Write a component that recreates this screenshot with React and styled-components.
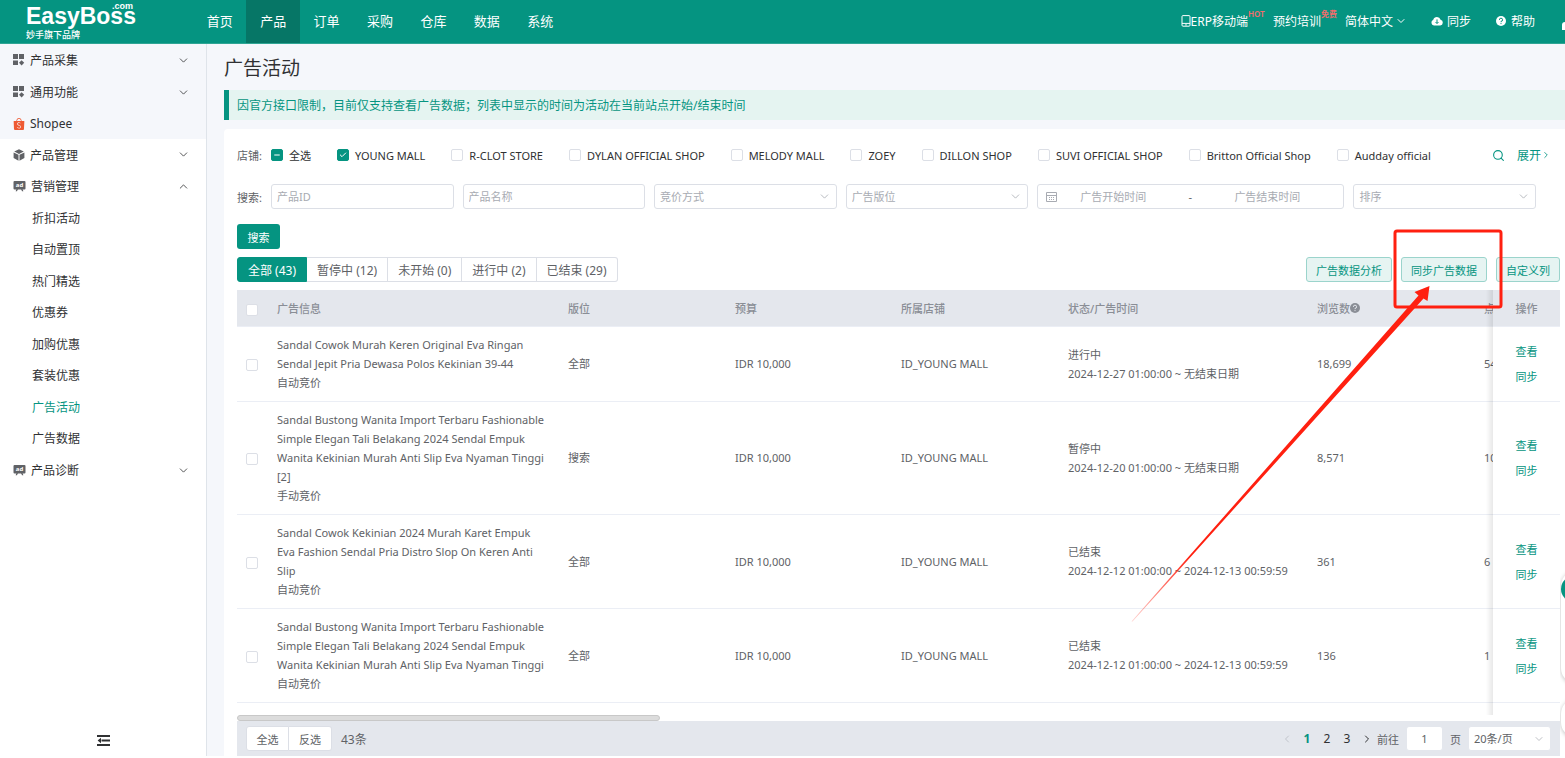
import { Check, ChevronDown, ChevronLeft, ChevronRight, ChevronUp, Minus, Search } from "lucide-react"
import { SiShopee } from "react-icons/si"
import styled, { createGlobalStyle } from "styled-components"

const GlobalStyle = createGlobalStyle`
* { box-sizing: border-box; }
body {
margin: 0;
background: white;
color: #606266;
font-family: "Noto Sans", "Noto Sans CJK SC", sans-serif;
font-size: 11px;
overflow: hidden;
}
button, input, select { font: inherit; color: inherit; margin: 0; }
a { color: inherit; text-decoration: none; }
svg { display: block; flex: none; }
`

const Shell = styled.div`
height: 100vh;
padding-bottom: 2px;
display: flex;
flex-direction: column;
position: relative;
overflow: hidden;
`

/* header */
const Header = styled.header`
height: 44px;
flex: none;
display: flex;
background: #059481;
border-bottom: 1px solid #2fa594;
color: white;
`
const Brand = styled.a`
width: 193px;
padding: 3px 0 0 26px;
display: flex;
flex-direction: column;
`
const BrandName = styled.span`
display: flex;
align-items: flex-start;
font: bold 23px/26px "Liberation Sans", sans-serif;
position: relative;
`
const BrandSuffix = styled.span`
position: absolute;
left: 86px;
top: -2px;
font: bold 9px/10px "Liberation Sans", sans-serif;
`
const BrandNote = styled.span`
font-size: 9px;
line-height: 12px;
font-weight: 500;
`
const Nav = styled.nav`
display: flex;
width: 374px;
`
const NavItem = styled.a`
flex: 1;
display: flex;
align-items: center;
justify-content: center;
font-size: 13px;
padding-bottom: 2px;
background: ${(p) => (p.$active ? "#067666" : "transparent")};
`
const Tools = styled.div`
margin-left: auto;
display: flex;
align-items: center;
font-size: 12px;
padding-bottom: 2px;
`
const Tool = styled.a`
display: flex;
align-items: center;
gap: ${(p) => p.$gap || 0}px;
margin-right: ${(p) => p.$space}px;
position: relative;
white-space: nowrap;
`
const Tag = styled.sup`
position: absolute;
left: 100%;
top: -3px;
color: #f56c6c;
font-size: 8px;
line-height: 10px;
font-weight: 600;
`
const Avatar = styled.span`
width: 3px;
height: 8px;
margin-top: 10px;
border-radius: 8px 0 0 0;
background: white;
`

/* sidebar */
const Body = styled.div`
flex: 1;
min-height: 0;
display: flex;
background: #f5f7fb;
`
const Sidebar = styled.aside`
width: 207px;
flex: none;
display: flex;
flex-direction: column;
background: white;
border-right: 1px solid #dfe4ea;
color: #303133;
font-size: 12px;
`
const MenuTop = styled.div`
background: #f5f7fb;
`
const MenuItem = styled.a`
height: ${(p) => p.$height || 32}px;
padding: 0 16px 0 13px;
display: flex;
align-items: center;
gap: 5px;
`
const MenuLabel = styled.span`
flex: 1;
`
const SubMenu = styled.div`
display: grid;
grid-auto-rows: 1fr;
height: 252px;
`
const SubItem = styled.a`
display: flex;
align-items: center;
padding-left: 32px;
color: ${(p) => (p.$active ? "#059481" : "inherit")};
`
const Collapse = styled.button`
margin: auto auto 10px;
padding: 0;
border: 0;
background: none;
`

/* content */
const Main = styled.main`
flex: 1;
min-width: 0;
padding-left: 17px;
display: flex;
flex-direction: column;
`
const Title = styled.h1`
margin: 0;
padding-top: 2px;
font-size: 19px;
line-height: 44px;
font-weight: 400;
color: #303133;
`
const Notice = styled.p`
margin: 0 0 9px;
padding: 2px 0 0 8px;
border-left: 5px solid #059481;
background: #e5f4f1;
color: #059481;
font-size: 12px;
line-height: 28px;
`
const Card = styled.section`
flex: 1;
min-height: 0;
display: flex;
flex-direction: column;
padding: 13px 5px 0 13px;
background: white;
border-radius: 4px 0 0 0;
`
const ShopRow = styled.div`
height: 26px;
margin-bottom: 16px;
display: flex;
align-items: center;
gap: 9px;
`
const ShopList = styled.div`
flex: 1;
display: flex;
gap: 26px;
color: #303133;
white-space: nowrap;
`
const ShopLabel = styled.label`
display: flex;
align-items: center;
gap: 6px;
`
const ShopTools = styled.div`
display: flex;
align-items: center;
gap: 12px;
padding-right: 9px;
color: #059481;
font-size: 12px;
`
const More = styled.a`
display: flex;
align-items: center;
`
const Box = styled.span`
display: inline-grid;
vertical-align: middle;
width: 12px;
height: 12px;
flex: none;
place-items: center;
color: white;
svg, input { grid-area: 1 / 1; }
svg { pointer-events: none; }
`
const BoxInput = styled.input`
appearance: none;
width: 12px;
height: 12px;
background: ${(p) => (p.$on ? "#059481" : "white")};
border: 1px solid ${(p) => (p.$on ? "#059481" : "#dcdfe6")};
border-radius: 2px;
`
const Filters = styled.form`
display: grid;
grid-template-columns: auto 183fr 183fr 183fr 183fr 308fr 183fr;
align-items: center;
gap: 9px;
padding-right: 24px;
margin-bottom: 15px;
`
const fieldBox = `
height: 25px;
border: 1px solid #dcdfe6;
border-radius: 3px;
background: white;
min-width: 0;
`
const Field = styled.input`
${fieldBox}
padding: 0 5px;
&::placeholder { color: #a8abb2; }
`
const SelectWrap = styled.span`
min-width: 0;
display: grid;
align-items: center;
color: #a8abb2;
svg, select { grid-area: 1 / 1; }
svg { justify-self: end; margin-right: 6px; pointer-events: none; }
`
const Select = styled.select`
${fieldBox}
appearance: none;
width: 100%;
padding: 0 5px;
`
const DateRange = styled.span`
${fieldBox}
display: flex;
align-items: center;
padding: 0 20px 0 8px;
`
const DateInput = styled.input`
flex: 1;
min-width: 0;
border: 0;
background: none;
text-align: center;
&::placeholder { color: #a8abb2; }
`
const DateDash = styled.span`
width: 42px;
text-align: center;
`
const Primary = styled.button`
align-self: flex-start;
width: 43px;
height: 25px;
flex: none;
margin-bottom: 8px;
padding: 0;
border: 0;
border-radius: 3px;
background: #059481;
color: white;
`
const ActionRow = styled.div`
display: flex;
justify-content: space-between;
margin-bottom: 8px;
`
const Tabs = styled.div`
display: flex;
`
const Tab = styled.button`
height: 25px;
padding: 0 10px;
border: 1px solid ${(p) => (p.$active ? "#059481" : "#dcdfe6")};
border-left-width: ${(p) => (p.$active ? 1 : 0)}px;
background: ${(p) => (p.$active ? "#059481" : "white")};
color: ${(p) => (p.$active ? "white" : "#606266")};
font-size: 12px;
&:first-child { border-radius: 3px 0 0 3px; }
&:last-child { border-radius: 0 3px 3px 0; }
`
const Actions = styled.div`
display: flex;
gap: 9px;
`
const Plain = styled.button`
height: 25px;
padding: 0 9px;
border: 1px solid #9bd4cc;
border-radius: 3px;
background: #e6f4f2;
color: #059481;
`

/* table */
const TableWrap = styled.div`
flex: 1;
min-height: 0;
overflow: hidden;
`
const Table = styled.table`
table-layout: fixed;
width: 1472px;
border-collapse: separate;
border-spacing: 0;
line-height: 19px;
`
const Th = styled.th`
height: 37px;
padding: 0 9px;
background: #e4e7ed;
border-bottom: 1px solid #ebeef5;
color: #8a8e96;
font-weight: 500;
text-align: left;
white-space: nowrap;
`
const Td = styled.td`
padding: 8px 9px 9px;
border-bottom: 1px solid #ebeef5;
vertical-align: middle;
`
const FixedEdge = `
position: sticky;
right: 0;
text-align: center;
&::before {
content: "";
position: absolute;
top: 0;
bottom: -1px;
right: 100%;
width: 7px;
background: linear-gradient(to left, rgba(0,0,0,0.09), rgba(0,0,0,0));
}
`
const FixedTh = styled(Th)`
${FixedEdge}
`
const FixedTd = styled(Td)`
${FixedEdge}
background: white;
color: #059481;
padding-top: 0;
padding-bottom: 0;
`
const HeadHelp = styled.span`
display: flex;
align-items: center;
`
const RowLink = styled.a`
display: block;
line-height: 25px;
`
const ScrollTrack = styled.div`
height: 6px;
flex: none;
background: white;
`
const ScrollThumb = styled.div`
width: 32%;
height: 6px;
border-radius: 3px;
background: #dcdcdc;
border: 1px solid #c8c8c8;
`
const Footer = styled.footer`
height: 35px;
flex: none;
display: flex;
align-items: center;
justify-content: space-between;
padding: 0 9px;
background: #e4e7ed;
`
const FooterGroup = styled.div`
display: flex;
align-items: center;
gap: ${(p) => p.$gap}px;
`
const Pick = styled.button`
width: 43px;
height: 25px;
padding: 0;
border: 1px solid #dcdfe6;
border-left-width: ${(p) => (p.$last ? 0 : 1)}px;
background: white;
border-radius: ${(p) => (p.$last ? "0 3px 3px 0" : "3px 0 0 3px")};
`
const Total = styled.span`
font-size: 12px;
`
const Pager = styled.div`
display: flex;
align-items: center;
`
const PageLink = styled.a`
width: 20px;
display: flex;
justify-content: center;
font-size: 12px;
font-weight: ${(p) => (p.$active ? 700 : 400)};
color: ${(p) => (p.$active ? "#059481" : p.$off ? "#b4b8bf" : "#303133")};
`
const PageInput = styled.input`
${fieldBox}
width: 37px;
text-align: center;
border-color: #e4e7ed;
`
const PageSize = styled(SelectWrap)`
width: 83px;
select { border-color: #e4e7ed; color: #606266; }
`

/* things that float above the page */
const Dock = styled.div`
position: absolute;
right: 0;
top: 570px;
width: 5px;
height: 188px;
overflow: hidden;
`
const DockPanel = styled.div`
width: 40px;
height: ${(p) => p.$height}px;
margin: 0 0 14px 1px;
border-radius: 16px;
background: white;
box-shadow: 0 1px 4px rgba(0,0,0,0.25);
`
const DockDot = styled.div`
width: 26px;
height: 26px;
position: relative;
top: 6px;
left: 0;
border-radius: 50%;
background: #059481;
`
const Marker = styled.svg`
position: absolute;
top: 228px;
right: 60px;
pointer-events: none;
`

const GridIcon = () => (
  <svg width="12" height="12" viewBox="0 0 12 12" fill="#606266">
    <rect x="0" y="0" width="5" height="5" />
    <rect x="6" y="0" width="5" height="5" />
    <rect x="0" y="6.5" width="5" height="4.5" />
    <path d="M8.6 6.2 11.2 8.8 8.6 11.4 6 8.8Z" />
  </svg>
)

const CubeIcon = () => (
  <svg width="12" height="12" viewBox="0 0 12 12" fill="#606266">
    <path d="M6 .3 10.8 2.5 6 4.9 1.2 2.5ZM.6 3.4 5.5 5.8V11.7L.6 9.1ZM11.4 3.4 6.5 5.8V11.7L11.4 9.1Z" />
  </svg>
)

const AdIcon = () => (
  <svg width="13" height="12" viewBox="0 0 13 12" fill="#606266">
    <rect x=".5" y="1" width="12" height="8.4" rx="1" />
    <path d="M3.5 9 2.6 11.2H4L5 9ZM9.5 9 10.4 11.2H9L8 9Z" />
    <text x="6.5" y="7.4" fill="white" fontSize="6" fontWeight="bold" textAnchor="middle">ad</text>
  </svg>
)

const PhoneIcon = () => (
  <svg width="10" height="12" viewBox="0 0 10 12" fill="none" stroke="white">
    <rect x="1" y=".6" width="8" height="10.6" rx="1" />
    <path d="M1 8.4H9M4.2 9.9H5.8" />
  </svg>
)

const CloudIcon = () => (
  <svg width="12" height="10" viewBox="0 0 12 10">
    <path fill="white" d="M3 9.4A2.9 2.9 0 0 1 2.3 3.8 3.8 3.8 0 0 1 9.6 3.7 2.9 2.9 0 0 1 9.2 9.4Z" />
    <path d="M6 3.4V7.4M4.5 6 6 7.5 7.5 6" fill="none" stroke="#059481" />
  </svg>
)

const HelpIcon = ({ color, mark }) => (
  <svg width="10" height="10" viewBox="0 0 10 10">
    <circle cx="5" cy="5" r="5" fill={color} />
    <path d="M3.4 3.9A1.6 1.6 0 1 1 5 5.4V6.2M5 7.1V8.1" fill="none" stroke={mark} />
  </svg>
)

const CalendarIcon = () => (
  <svg width="11" height="11" viewBox="0 0 11 11" fill="none" stroke="#a8abb2">
    <path d="M.5 1.5H10.5V10.5H.5ZM.5 4.5H10.5M3 6.5H4M5 6.5H6M7 6.5H8M3 8.5H4M5 8.5H6M7 8.5H8" />
  </svg>
)

const FoldIcon = () => (
  <svg width="13" height="11" viewBox="0 0 13 11">
    <path d="M0 1H13M4.5 5.5H13M0 10H13" stroke="#303133" strokeWidth="2" />
    <path d="M4 2.8V8.2L.6 5.5Z" fill="#303133" />
  </svg>
)

const CheckBox = ({ state, label }) => (
  <Box>
    <BoxInput type="checkbox" $on={!!state} defaultChecked={state === "on"} aria-label={label} />
    {state === "on" && <Check size={8} strokeWidth={3} />}
    {state === "some" && <Minus size={8} strokeWidth={3} />}
  </Box>
)

const Picker = ({ label }) => (
  <SelectWrap>
    <Select aria-label={label}>
      <option>{label}</option>
    </Select>
    <ChevronDown size={13} strokeWidth={1.5} />
  </SelectWrap>
)

const nav = ["首页", "产品", "订单", "采购", "仓库", "数据", "系统"]
const subMenu = ["折扣活动", "自动置顶", "热门精选", "优惠券", "加购优惠", "套装优惠", "广告活动", "广告数据"]
const shops = [
  "YOUNG MALL",
  "R-CLOT STORE",
  "DYLAN OFFICIAL SHOP",
  "MELODY MALL",
  "ZOEY",
  "DILLON SHOP",
  "SUVI OFFICIAL SHOP",
  "Britton Official Shop",
  "Audday official",
]
const tabs = ["全部 (43)", "暂停中 (12)", "未开始 (0)", "进行中 (2)", "已结束 (29)"]
const columns = [31, 291, 167, 166, 167, 249, 167, 167, 67]
const rows = [
  {
    lines: ["Sandal Cowok Murah Keren Original Eva Ringan", "Sendal Jepit Pria Dewasa Polos Kekinian 39-44", "自动竞价"],
    place: "全部",
    status: "进行中",
    time: "2024-12-27 01:00:00 ~ 无结束日期",
    views: "18,699",
    clicks: "54",
  },
  {
    lines: [
      "Sandal Bustong Wanita Import Terbaru Fashionable",
      "Simple Elegan Tali Belakang 2024 Sendal Empuk",
      "Wanita Kekinian Murah Anti Slip Eva Nyaman Tinggi",
      "[2]",
      "手动竞价",
    ],
    place: "搜索",
    status: "暂停中",
    time: "2024-12-20 01:00:00 ~ 无结束日期",
    views: "8,571",
    clicks: "10",
  },
  {
    lines: ["Sandal Cowok Kekinian 2024 Murah Karet Empuk", "Eva Fashion Sendal Pria Distro Slop On Keren Anti", "Slip", "自动竞价"],
    place: "全部",
    status: "已结束",
    time: "2024-12-12 01:00:00 ~ 2024-12-13 00:59:59",
    views: "361",
    clicks: "6",
  },
  {
    lines: [
      "Sandal Bustong Wanita Import Terbaru Fashionable",
      "Simple Elegan Tali Belakang 2024 Sendal Empuk",
      "Wanita Kekinian Murah Anti Slip Eva Nyaman Tinggi",
      "自动竞价",
    ],
    place: "全部",
    status: "已结束",
    time: "2024-12-12 01:00:00 ~ 2024-12-13 00:59:59",
    views: "136",
    clicks: "1",
  },
]

const TopBar = () => (
  <Header>
    <Brand href="#">
      <BrandName>
        EasyBoss<BrandSuffix>.com</BrandSuffix>
      </BrandName>
      <BrandNote>妙手旗下品牌</BrandNote>
    </Brand>
    <Nav>
      {nav.map((n) => (
        <NavItem key={n} href="#" $active={n === "产品"}>{n}</NavItem>
      ))}
    </Nav>
    <Tools>
      <Tool href="#" $space={25}><PhoneIcon />ERP移动端<Tag>HOT</Tag></Tool>
      <Tool href="#" $space={24}>预约培训<Tag>免费</Tag></Tool>
      <Tool href="#" $space={24} $gap={2}>简体中文<ChevronDown size={12} strokeWidth={2} /></Tool>
      <Tool href="#" $space={25} $gap={4}><CloudIcon />同步</Tool>
      <Tool href="#" $space={27} $gap={5}><HelpIcon color="white" mark="#059481" />帮助</Tool>
      <Avatar />
    </Tools>
  </Header>
)

const SideMenu = () => (
  <Sidebar>
    <MenuTop>
      <MenuItem href="#"><GridIcon /><MenuLabel>产品采集</MenuLabel><ChevronDown size={13} strokeWidth={1.5} /></MenuItem>
      <MenuItem href="#"><GridIcon /><MenuLabel>通用功能</MenuLabel><ChevronDown size={13} strokeWidth={1.5} /></MenuItem>
      <MenuItem href="#" $height={31}><SiShopee size={12} color="#ee5a33" /><MenuLabel>Shopee</MenuLabel></MenuItem>
    </MenuTop>
    <MenuItem href="#" $height={31}><CubeIcon /><MenuLabel>产品管理</MenuLabel><ChevronDown size={13} strokeWidth={1.5} /></MenuItem>
    <MenuItem href="#"><AdIcon /><MenuLabel>营销管理</MenuLabel><ChevronUp size={13} strokeWidth={1.5} /></MenuItem>
    <SubMenu>
      {subMenu.map((s) => (
        <SubItem key={s} href="#" $active={s === "广告活动"}>{s}</SubItem>
      ))}
    </SubMenu>
    <MenuItem href="#"><AdIcon /><MenuLabel>产品诊断</MenuLabel><ChevronDown size={13} strokeWidth={1.5} /></MenuItem>
    <Collapse aria-label="收起"><FoldIcon /></Collapse>
  </Sidebar>
)

const AdTable = () => (
  <TableWrap>
    <Table>
      <colgroup>
        {columns.map((w, i) => (
          <col key={i} width={w} />
        ))}
      </colgroup>
      <thead>
        <tr>
          <Th><CheckBox label="选择全部" /></Th>
          <Th>广告信息</Th>
          <Th>版位</Th>
          <Th>预算</Th>
          <Th>所属店铺</Th>
          <Th>状态/广告时间</Th>
          <Th><HeadHelp>浏览数<HelpIcon color="#8a8e96" mark="#e4e7ed" /></HeadHelp></Th>
          <Th>点</Th>
          <FixedTh>操作</FixedTh>
        </tr>
      </thead>
      <tbody>
        {rows.map((r, i) => (
          <tr key={i}>
            <Td><CheckBox label={r.lines[0]} /></Td>
            <Td>{r.lines.map((l) => <div key={l}>{l}</div>)}</Td>
            <Td>{r.place}</Td>
            <Td>IDR 10,000</Td>
            <Td>ID_YOUNG MALL</Td>
            <Td><div>{r.status}</div><div>{r.time}</div></Td>
            <Td>{r.views}</Td>
            <Td>{r.clicks}</Td>
            <FixedTd>
              <RowLink href="#">查看</RowLink>
              <RowLink href="#">同步</RowLink>
            </FixedTd>
          </tr>
        ))}
        <tr>
          <Td colSpan={8} />
          <FixedTd />
        </tr>
      </tbody>
    </Table>
  </TableWrap>
)

const App = () => {
  return (
    <Shell>
      <GlobalStyle />
      <TopBar />
      <Body>
        <SideMenu />
        <Main>
          <Title>广告活动</Title>
          <Notice>因官方接口限制，目前仅支持查看广告数据；列表中显示的时间为活动在当前站点开始/结束时间</Notice>
          <Card>
            <ShopRow>
              <span>店铺:</span>
              <ShopList>
                <ShopLabel><CheckBox state="some" />全选</ShopLabel>
                {shops.map((s, i) => (
                  <ShopLabel key={s}><CheckBox state={i === 0 ? "on" : undefined} />{s}</ShopLabel>
                ))}
              </ShopList>
              <ShopTools>
                <Search size={13} strokeWidth={2} />
                <More href="#">展开<ChevronRight size={10} /></More>
              </ShopTools>
            </ShopRow>
            <Filters>
              <span>搜索:</span>
              <Field placeholder="产品ID" aria-label="产品ID" />
              <Field placeholder="产品名称" aria-label="产品名称" />
              <Picker label="竞价方式" />
              <Picker label="广告版位" />
              <DateRange>
                <CalendarIcon />
                <DateInput placeholder="广告开始时间" aria-label="广告开始时间" />
                <DateDash>-</DateDash>
                <DateInput placeholder="广告结束时间" aria-label="广告结束时间" />
              </DateRange>
              <Picker label="排序" />
            </Filters>
            <Primary>搜索</Primary>
            <ActionRow>
              <Tabs>
                {tabs.map((t, i) => (
                  <Tab key={t} $active={i === 0}>{t}</Tab>
                ))}
              </Tabs>
              <Actions>
                <Plain>广告数据分析</Plain>
                <Plain>同步广告数据</Plain>
                <Plain>自定义列</Plain>
              </Actions>
            </ActionRow>
            <AdTable />
            <ScrollTrack><ScrollThumb /></ScrollTrack>
            <Footer>
              <FooterGroup $gap={9}>
                <div><Pick>全选</Pick><Pick $last>反选</Pick></div>
                <Total>43条</Total>
              </FooterGroup>
              <FooterGroup $gap={7}>
                <Pager>
                  <PageLink href="#" $off aria-label="上一页"><ChevronLeft size={12} strokeWidth={1.5} /></PageLink>
                  <PageLink href="#" $active>1</PageLink>
                  <PageLink href="#">2</PageLink>
                  <PageLink href="#">3</PageLink>
                  <PageLink href="#" aria-label="下一页"><ChevronRight size={12} strokeWidth={2} /></PageLink>
                  <span>前往</span>
                </Pager>
                <PageInput defaultValue="1" aria-label="页码" />
                <span>页</span>
                <PageSize>
                  <Select aria-label="每页条数"><option>20条/页</option></Select>
                  <ChevronDown size={12} strokeWidth={1.5} />
                </PageSize>
              </FooterGroup>
            </Footer>
          </Card>
        </Main>
      </Body>
      <Dock>
        <DockPanel $height={114}><DockDot /></DockPanel>
        <DockPanel $height={40} />
      </Dock>
      <Marker width="376" height="396" viewBox="1129 228 376 396">
        <defs>
          <linearGradient id="fade" gradientUnits="userSpaceOnUse" x1="1132" y1="621" x2="1190" y2="556">
            <stop offset="0" stopColor="#ff2010" stopOpacity="0.2" />
            <stop offset="1" stopColor="#ff2010" />
          </linearGradient>
        </defs>
        <rect x="1395" y="231" width="106" height="76" rx="2" fill="none" stroke="#ff2010" strokeWidth="3" />
        <path d="M1131.5 621.5 1418.5 295.5 1414.5 292 1429.5 286 1427.5 301 1423.5 298.5 1132.5 621.5Z" fill="url(#fade)" />
      </Marker>
    </Shell>
  )
}

export default App
